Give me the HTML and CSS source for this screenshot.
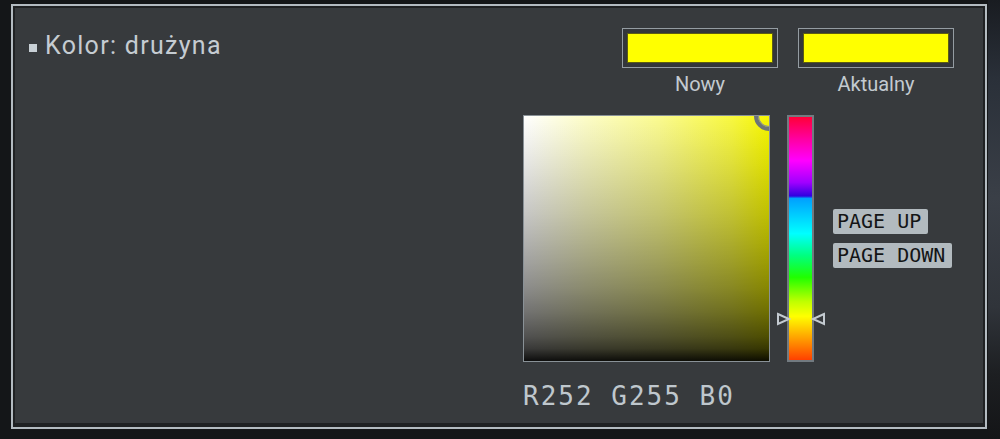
FILE: index.html
```html
<!DOCTYPE html>
<html lang="pl">
<head>
<meta charset="utf-8">
<title>Kolor: drużyna</title>
<link rel="stylesheet" href="styles.css">
</head>
<body>
<div class="frame">
  <div class="panel">
    <div class="title">
      <span class="bullet"></span>
      <span class="title-text">Kolor: drużyna</span>
    </div>
    <div class="picker">
      <div class="swatches">
        <div class="swatch-col">
          <div class="swatch"><div class="swatch-fill"></div></div>
          <div class="swatch-label">Nowy</div>
        </div>
        <div class="swatch-col">
          <div class="swatch"><div class="swatch-fill"></div></div>
          <div class="swatch-label">Aktualny</div>
        </div>
      </div>
      <div class="picker-row">
        <div class="sv">
          <span class="sv-ring"></span>
        </div>
        <div class="hue">
          <svg class="hue-marks" width="50" height="14" viewBox="0 0 50 14">
            <polygon points="2,2 13,7 2,12" fill="none" stroke="#c3cad0" stroke-width="2"/>
            <polygon points="48,2 37,7 48,12" fill="none" stroke="#c3cad0" stroke-width="2"/>
          </svg>
        </div>
        <div class="keys">
          <div class="key">PAGE UP</div>
          <div class="key">PAGE DOWN</div>
        </div>
      </div>
      <div class="rgb">R252 G255 B0</div>
    </div>
  </div>
</div>
</body>
</html>
```

FILE: styles.css
```css
html, body {
  margin: 0;
  padding: 0;
}

body {
  width: 1000px;
  height: 439px;
  overflow: hidden;
  background:
    linear-gradient(to bottom, #191c21 0%, #2a3039 18%, #3a3f47 45%, #30343a 70%, #1d1f22 85%, #141517 100%) right top / 12px 100% no-repeat,
    #141618;
}

.frame {
  margin: 4px 0 0 11px;
  width: 976px;
  height: 425px;
  box-sizing: border-box;
  border: 2px solid #b3bbc1;
  background: #1f2123;
  padding: 2px 2px 4px 2px;
}

.panel {
  height: 415px;
  background: #373a3d;
  display: flex;
  justify-content: space-between;
  align-items: flex-start;
  padding: 0 29px 0 14px;
}

.title {
  display: flex;
  align-items: center;
  gap: 8px;
  margin-top: 23px;
}

.bullet {
  width: 8px;
  height: 8px;
  background: #c8d0d6;
  margin-top: 3px;
}

.title-text {
  font-family: Roboto, "DejaVu Sans", sans-serif;
  font-size: 25px;
  line-height: 30px;
  letter-spacing: 1.3px;
  color: #c5ccd2;
}

.picker {
  width: 431px;
  display: flex;
  flex-direction: column;
}

.swatches {
  display: flex;
  justify-content: flex-end;
  gap: 20px;
  margin-top: 20px;
}

.swatch-col {
  width: 156px;
  display: flex;
  flex-direction: column;
  align-items: center;
}

.swatch {
  width: 156px;
  height: 40px;
  box-sizing: border-box;
  border: 1px solid #949ca2;
  padding: 4px;
  background: #33363a;
}

.swatch-fill {
  height: 100%;
  box-sizing: border-box;
  background: #ffff00;
  border: 1px solid #5c5c14;
}

.swatch-label {
  margin-top: 4px;
  font-family: Roboto, "DejaVu Sans", sans-serif;
  font-size: 20px;
  line-height: 24px;
  color: #c3cad0;
}

.picker-row {
  display: flex;
  align-items: center;
  margin-top: 19px;
}

.sv {
  position: relative;
  width: 247px;
  height: 247px;
  box-sizing: border-box;
  border: 1px solid #899197;
  overflow: hidden;
  background:
    linear-gradient(to bottom,
      rgba(0, 0, 0, 0) 0%,
      rgba(0, 0, 0, 0.05) 10%,
      rgba(0, 0, 0, 0.106) 20%,
      rgba(0, 0, 0, 0.163) 30%,
      rgba(0, 0, 0, 0.225) 40%,
      rgba(0, 0, 0, 0.293) 50%,
      rgba(0, 0, 0, 0.368) 60%,
      rgba(0, 0, 0, 0.452) 70%,
      rgba(0, 0, 0, 0.553) 80%,
      rgba(0, 0, 0, 0.684) 90%,
      rgba(0, 0, 0, 0.776) 95%,
      rgba(0, 0, 0, 0.95) 100%),
    linear-gradient(to right, #ffffff 0%, #fdfdc8 25%, #fbfb90 55%, #f8f840 85%, #f6f600 100%);
  margin-right: 17px;
}

.sv-ring {
  position: absolute;
  right: -15px;
  top: -15px;
  width: 22px;
  height: 22px;
  border: 4px solid #6c7379;
  border-radius: 50%;
  box-shadow: inset 0 0 0 1px #8a9197;
}

.hue {
  position: relative;
  width: 27px;
  height: 247px;
  box-sizing: border-box;
  border: 2px solid #727a80;
  background: linear-gradient(to bottom,
    #ff0038 0%,
    #ff00a0 9%,
    #ff00ff 18%,
    #a000ff 27%,
    #3000e0 32.5%,
    #00a0ff 33.5%,
    #00ffff 48%,
    #00ff80 57%,
    #20ff00 66%,
    #c0ff00 76%,
    #ffff00 82%,
    #ffa000 91%,
    #ff4000 100%);
  margin-right: 19px;
}

.hue-marks {
  position: absolute;
  left: -13px;
  top: 195px;
}

.keys {
  display: flex;
  flex-direction: column;
  align-items: flex-start;
  gap: 9px;
}

.key {
  height: 25px;
  line-height: 25px;
  padding: 0 7px 0 4px;
  background: #b2babf;
  border-radius: 2px;
  font-family: "DejaVu Sans Mono", monospace;
  font-size: 20px;
  color: #141516;
}

.rgb {
  margin-top: 19px;
  font-family: "DejaVu Sans Mono", monospace;
  font-size: 26px;
  line-height: 30px;
  letter-spacing: 2px;
  color: #bfc7cd;
}
```
